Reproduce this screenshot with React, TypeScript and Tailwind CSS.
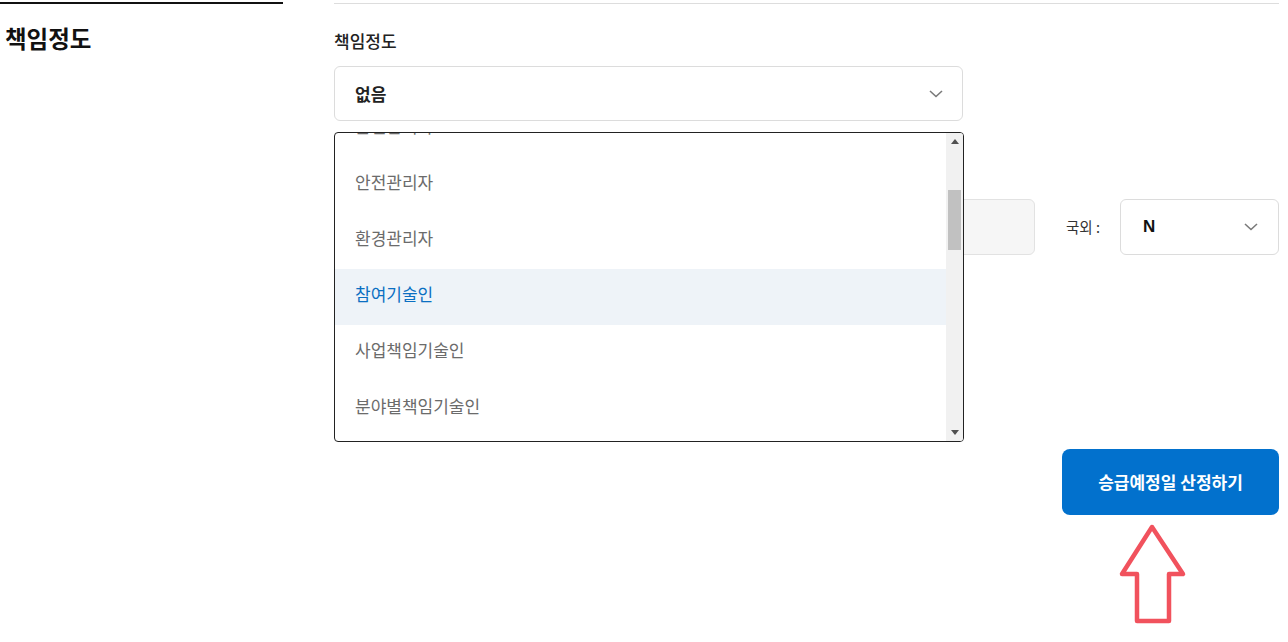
import { useState } from "react";

const options = ["품질관리자", "안전관리자", "환경관리자", "참여기술인", "사업책임기술인", "분야별책임기술인"];

const Chevron = ({ className }: { className?: string }) => (
  <svg className={className} width="14" height="8" viewBox="0 0 14 8" fill="none">
    <polyline points="1,1 7,6.5 13,1" stroke="#7a7a7a" strokeWidth="1.6" />
  </svg>
);

const App = () => {
  const [selected] = useState("참여기술인");

  return (
    <div className="relative w-[1288px] h-[642px] overflow-hidden bg-white flex font-['Noto_Sans_CJK_KR','Noto_Sans',sans-serif] text-[#222]">
      {/* section title */}
      <div className="w-[283px] shrink-0 mt-[2px] border-t-2 border-[#111]">
        <h2 className="pl-[5px] pt-[19px] text-[23.5px] leading-[30px] font-bold text-[#111]">책임정도</h2>
      </div>

      {/* form */}
      <div className="ml-[51px] w-[945px] mt-[3px] border-t border-[#dddddd]">
        <div className="pt-[25px] text-[17px] leading-[24px] font-medium text-[#222]">책임정도</div>

        <div className="relative mt-[13px]">
          <div className="w-[629px] h-[55px] border border-[#dcdcdc] rounded-[6px] flex items-center justify-between pl-[20px] pr-[19px]">
            <span className="text-[17px] font-bold leading-[20px]">없음</span>
            <Chevron />
          </div>

          {/* open listbox */}
          <div className="absolute left-0 top-[66px] z-10 w-[630px] h-[310px] border border-[#222] rounded-[4px] bg-white overflow-hidden">
            <div className="h-full pr-[17px] overflow-hidden">
              <ul className="-mt-[32px]">
                {options.map((o) => (
                  <li
                    key={o}
                    className={
                      o === selected
                        ? "h-[56px] flex items-center pl-[20px] pb-[7px] text-[17px] leading-[20px] bg-[#eef3f8] text-[#0a6fc2]"
                        : "h-[56px] flex items-center pl-[20px] pb-[7px] text-[17px] leading-[20px] text-[#6b6b6b]"
                    }
                  >
                    {o}
                  </li>
                ))}
              </ul>
            </div>
            <div className="absolute right-0 top-0 bottom-0 w-[17px] bg-[#f1f1f1] flex flex-col items-center">
              <svg className="mt-[6px]" width="8" height="5" viewBox="0 0 8 5">
                <polygon points="4,0 8,5 0,5" fill="#505050" />
              </svg>
              <div className="mt-[46px] w-[13px] h-[60px] bg-[#c1c1c1]" />
              <div className="flex-1" />
              <svg className="mb-[6px]" width="8" height="5" viewBox="0 0 8 5">
                <polygon points="0,0 8,0 4,5" fill="#505050" />
              </svg>
            </div>
          </div>
        </div>

        <div className="text-[17px] leading-[24px] font-medium text-[#222] mt-[20px]">참여기간</div>
        <div className="mt-[34px] flex items-center">
          <div className="w-[701px] h-[56px] bg-[#f6f6f6] border border-[#e2e2e2] rounded-[6px]" />
          <span className="ml-[31px] text-[14.5px] leading-[20px] text-[#333]">국외 :</span>
          <div className="ml-[20px] w-[159px] h-[56px] border border-[#dcdcdc] rounded-[6px] flex items-center justify-between pl-[22px] pr-[20px]">
            <span className="text-[17px] font-bold font-['Liberation_Sans',sans-serif] text-[#111]">N</span>
            <Chevron />
          </div>
        </div>

        <div className="mt-[194px] flex justify-end">
          <button className="w-[217px] h-[66px] rounded-[8px] bg-[#0271cd] text-white text-[17px] leading-[20px] font-bold">
            승급예정일 산정하기
          </button>
        </div>
      </div>

      {/* annotation arrow */}
      <svg className="absolute left-[1118px] top-[523px]" width="70" height="103" viewBox="0 0 70 103" fill="none">
        <polygon
          points="34,4 65,51 51,51 51,98 19,98 19,51 4,51"
          stroke="#f1525d"
          strokeWidth="4.5"
          strokeLinejoin="round"
        />
      </svg>
    </div>
  );
};

export default App;
